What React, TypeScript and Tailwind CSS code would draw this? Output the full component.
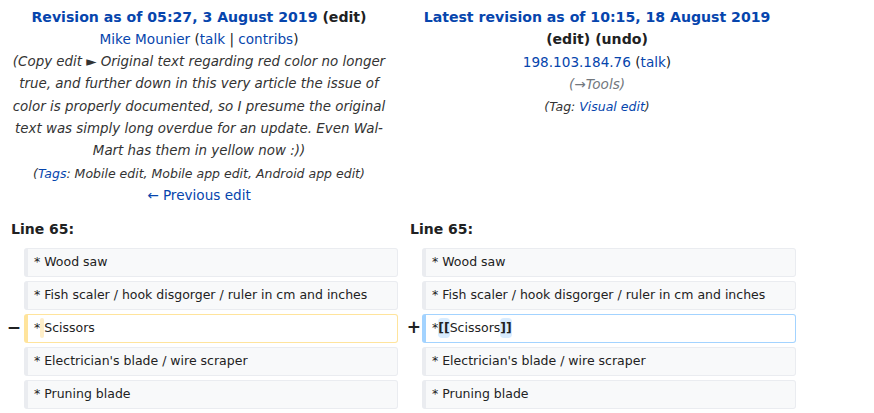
import React from "react";

const link = "text-[#0645ad]";

function Box({
  kind,
  children,
}: {
  kind: "ctx" | "del" | "add";
  children: React.ReactNode;
}) {
  const cls =
    kind === "ctx"
      ? "bg-[#f8f9fa] border-[#eaecf0]"
      : kind === "del"
      ? "bg-white border-[#ffe49c]"
      : "bg-white border-[#a3d3ff]";
  return (
    <div
      className={`h-[29px] flex items-center border border-l-4 rounded-[3px] pl-[6px] text-[12.5px] text-[#222] whitespace-pre ${cls}`}
    >
      {children}
    </div>
  );
}

function Row({
  left,
  right,
  lm,
  rm,
  lk = "ctx",
  rk = "ctx",
}: {
  left: React.ReactNode;
  right: React.ReactNode;
  lm?: string;
  rm?: string;
  lk?: "ctx" | "del" | "add";
  rk?: "ctx" | "del" | "add";
}) {
  return (
    <div className="grid grid-cols-[24px_374px_24px_374px] mb-[4px]">
      <div className="flex items-center justify-end pr-[3px] font-bold text-[17px] text-[#202122]">
        {lm}
      </div>
      <Box kind={lk}>{left}</Box>
      <div className="flex items-center justify-end pr-[1px] font-bold text-[17px] text-[#202122]">
        {rm}
      </div>
      <Box kind={rk}>{right}</Box>
    </div>
  );
}

export default function App() {
  return (
    <div className="w-[874px] h-[413px] bg-white overflow-hidden font-['DejaVu_Sans',sans-serif] text-[#202122]">
      <div className="grid grid-cols-[398px_398px] pt-[6px] text-[13.6px] leading-[22.4px]">
        <div className="text-center">
          <div className="font-bold text-[14.1px]">
            <span className={link}>Revision as of 05:27, 3 August 2019</span>{" "}
            (edit)
          </div>
          <div>
            <span className={link}>Mike Mounier</span> (
            <span className={link}>talk</span> |{" "}
            <span className={link}>contribs</span>)
          </div>
          <div className="italic text-[13.4px] text-[#333]">
            (Copy edit ► Original text regarding red color no longer
            <br />
            true, and further down in this very article the issue of
            <br />
            color is properly documented, so I presume the original
            <br />
            text was simply long overdue for an update. Even Wal-
            <br />
            Mart has them in yellow now :))
          </div>
          <div className="italic text-[12.5px] leading-[21px] text-[#333]">
            (<span className={link}>Tags</span>: Mobile edit, Mobile app edit,
            Android app edit)
          </div>
          <div className={link}>← Previous edit</div>
        </div>
        <div className="text-center">
          <div className="font-bold text-[14.1px]">
            <span className={link}>
              Latest revision as of 10:15, 18 August 2019
            </span>
            <br />
            (edit) (undo)
          </div>
          <div>
            <span className={link}>198.103.184.76</span> (
            <span className={link}>talk</span>)
          </div>
          <div className="italic text-[#72777d]">(→Tools)</div>
          <div className="italic text-[12.5px] leading-[21px] text-[#333]">
            (Tag: <span className={link}>Visual edit</span>)
          </div>
        </div>
      </div>

      <div className="grid grid-cols-[398px_398px] mt-[12px] mb-[7px] text-[14px] leading-[22.4px] font-bold">
        <div className="pl-[11px]">Line 65:</div>
        <div className="pl-[12px]">Line 65:</div>
      </div>

      <Row left="* Wood saw" right="* Wood saw" />
      <Row
        left="* Fish scaler / hook disgorger / ruler in cm and inches"
        right="* Fish scaler / hook disgorger / ruler in cm and inches"
      />
      <Row
        lm="−"
        rm="+"
        lk="del"
        rk="add"
        left={
          <>
            *
            <span className="bg-[#feeec8] rounded-[2px] leading-[20px] inline-block">
              {" "}
            </span>
            Scissors
          </>
        }
        right={
          <>
            *
            <span className="bg-[#d8ecff] rounded-[4px] font-bold leading-[20px] inline-block">
              [[
            </span>
            Scissors
            <span className="bg-[#d8ecff] rounded-[4px] font-bold leading-[20px] inline-block">
              ]]
            </span>
          </>
        }
      />
      <Row
        left="* Electrician's blade / wire scraper"
        right="* Electrician's blade / wire scraper"
      />
      <Row left="* Pruning blade" right="* Pruning blade" />
    </div>
  );
}
